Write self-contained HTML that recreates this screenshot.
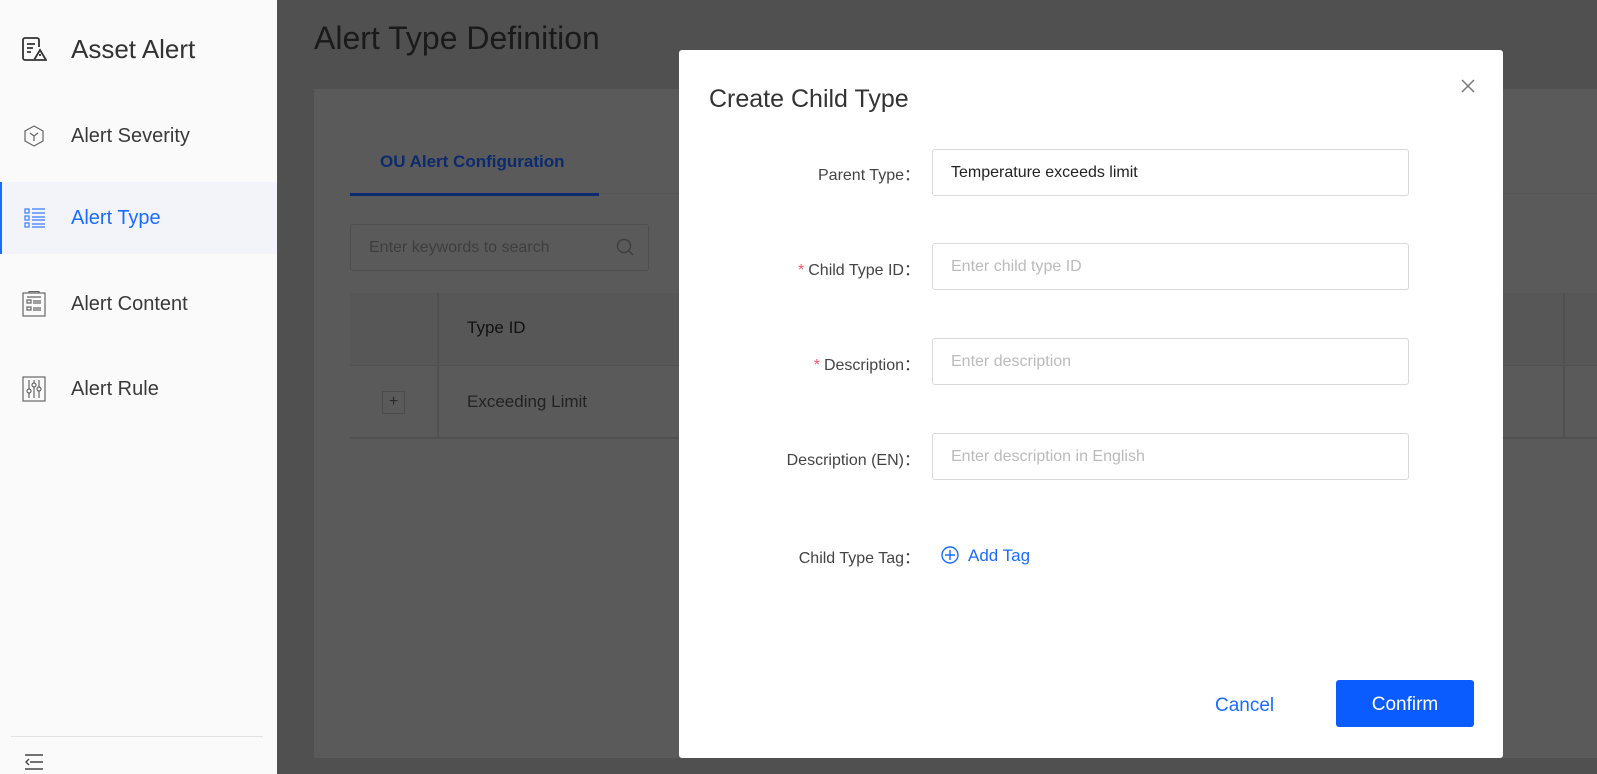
<!DOCTYPE html>
<html><head><meta charset="utf-8"><style>
*{box-sizing:border-box;margin:0;padding:0}
body{width:1597px;height:774px;overflow:hidden;position:relative;font-family:"Liberation Sans",sans-serif;background:#505050}
.sb{position:absolute;left:0;top:0;width:277px;height:774px;background:#fafafa}
.sb .it{position:absolute;left:0;width:277px;height:72px;display:flex;align-items:center;font-size:20px;color:#3a3a3a}
.sb .it span{position:absolute;left:71px}
.sb .it svg{position:absolute;left:22px}
.abs{position:absolute}
.lbl{position:absolute;right:677px;font-size:16px;color:#444;text-align:right;white-space:nowrap}
.inp{position:absolute;left:932px;width:477px;height:47px;border:1.5px solid #d9d9d9;border-radius:3px;font-size:16px;color:#bbb;padding-left:18px;line-height:46px}
.req{color:#f5576c;margin-right:4px}
</style></head><body>
<div class="sb">
 <div class="it" style="top:13px;font-size:26px;color:#333">
  <svg style="left:21px" width="26" height="26" viewBox="0 0 26 26" fill="none" stroke="#333" stroke-width="1.8"><path d="M18 11V4a2 2 0 0 0-2-2H4a2 2 0 0 0-2 2v18a2 2 0 0 0 2 2h8"/><path d="M6 8h8M6 12h6M6 16h4"/><path d="M19 14l6 10h-12z"/><path d="M19 18v2"/></svg>
  <span>Asset Alert</span></div>
 <div class="it" style="top:100px"><svg width="24" height="24" viewBox="0 0 24 24" fill="none" stroke="#666" stroke-width="1.2"><path d="M12 2l9 5v10l-9 5-9-5V7z"/><path d="M8 9l4 3 4-3M12 12v5"/></svg><span>Alert Severity</span></div>
 <div class="it" style="top:182px;background:#f2f4f9;color:#1a6cff;border-left:2px solid #1a6cff"><svg style="left:21px" width="24" height="24" viewBox="0 0 24 24" fill="none" stroke="#3a7bff" stroke-width="1.2"><rect x="2" y="3" width="4" height="4"/><rect x="2" y="10" width="4" height="4"/><rect x="2" y="17" width="4" height="4"/><path d="M9 3h13M9 7h13M9 11h13M9 14h13M9 18h13M9 21h13"/></svg><span style="left:69px">Alert Type</span></div>
 <div class="it" style="top:268px"><svg width="24" height="26" viewBox="0 0 24 26" fill="none" stroke="#666" stroke-width="1.2"><rect x="1" y="2" width="22" height="23"/><path d="M7 2V0.5h10V2M5 9h4v3H5zM5 16h4v3H5zM11 10h8M11 12h8M11 17h8M11 19h8M5 6h14"/></svg><span>Alert Content</span></div>
 <div class="it" style="top:353px"><svg width="24" height="26" viewBox="0 0 24 26" fill="none" stroke="#666" stroke-width="1.2"><rect x="1" y="1" width="22" height="24"/><path d="M7 4v18M12 4v18M17 4v18"/><circle cx="7" cy="15" r="2" fill="#fafafa"/><circle cx="12" cy="9" r="2" fill="#fafafa"/><circle cx="17" cy="13" r="2" fill="#fafafa"/></svg><span>Alert Rule</span></div>
 <div class="abs" style="left:11px;top:736px;width:252px;height:1px;background:#e3e3e3"></div>
 <svg class="abs" style="left:23px;top:754px" width="22" height="16" viewBox="0 0 22 16" fill="none" stroke="#444" stroke-width="1.4"><path d="M2 1h18M7 8h13M2 15h18M6 5l-3 3 3 3"/></svg>
</div>
<div class="abs" style="left:314px;top:20px;font-size:32px;color:#1a1a1a">Alert Type Definition</div>
<div class="abs" style="left:314px;top:89px;width:1300px;height:669px;background:#5a5a5a">
 <div class="abs" style="left:66px;top:63px;font-size:17px;font-weight:bold;color:#0c2a6e">OU Alert Configuration</div>
 <div class="abs" style="left:36px;top:104px;width:1300px;height:1px;background:#555"></div>
 <div class="abs" style="left:36px;top:104px;width:249px;height:3px;background:#0c2a6e"></div>
 <div class="abs" style="left:36px;top:135px;width:299px;height:47px;border:1.5px solid #4e4e4e;border-radius:3px;font-size:16px;color:#3e3e3e;padding-left:18px;line-height:46px">Enter keywords to search
  <svg class="abs" style="right:14px;top:13px" width="18" height="18" viewBox="0 0 18 18" fill="none" stroke="#3e3e3e" stroke-width="1.4"><circle cx="8" cy="8" r="6.5"/><path d="M13 13l4 4"/></svg></div>
 <div class="abs" style="left:36px;top:204px;width:1300px;height:72px;background:#575757"></div>
 <div class="abs" style="left:36px;top:276px;width:1300px;height:1px;background:#505050"></div>
 <div class="abs" style="left:36px;top:348px;width:1300px;height:2px;background:#505050"></div>
 <div class="abs" style="left:123px;top:204px;width:2px;height:145px;background:#505050"></div>
 <div class="abs" style="left:1249px;top:204px;width:2px;height:145px;background:#505050"></div>
 <div class="abs" style="left:153px;top:229px;font-size:17px;color:#111">Type ID</div>
 <div class="abs" style="left:153px;top:303px;font-size:17px;color:#222">Exceeding Limit</div>
 <div class="abs" style="left:68px;top:302px;width:23px;height:23px;border:1.5px solid #4c4c4c;color:#2a2a2a;font-size:16px;text-align:center;line-height:19px">+</div>
</div>
<div class="abs" style="left:679px;top:50px;width:824px;height:708px;background:#fff;border-radius:3px">
 <div class="abs" style="left:30px;top:35px;font-size:25px;color:#333">Create Child Type</div>
 <svg class="abs" style="left:782px;top:29px" width="14" height="14" viewBox="0 0 14 14" stroke="#777" stroke-width="1.5"><path d="M1 1l12 12M13 1L1 13"/></svg>
</div>
<div class="lbl" style="top:161px">Parent Type：</div>
<div class="inp" style="top:149px;color:#222">Temperature exceeds limit</div>
<div class="lbl" style="top:256px"><span class="req">*</span>Child Type ID：</div>
<div class="inp" style="top:243px">Enter child type ID</div>
<div class="lbl" style="top:351px"><span class="req">*</span>Description：</div>
<div class="inp" style="top:338px">Enter description</div>
<div class="lbl" style="top:446px">Description (EN)：</div>
<div class="inp" style="top:433px">Enter description in English</div>
<div class="lbl" style="top:544px">Child Type Tag：</div>
<svg class="abs" style="left:941px;top:546px" width="18" height="18" viewBox="0 0 18 18" fill="none" stroke="#1a6cff" stroke-width="1.4"><circle cx="9" cy="9" r="8"/><path d="M9 4v10M4 9h10"/></svg>
<div class="abs" style="left:968px;top:546px;font-size:17px;color:#1a6cff">Add Tag</div>
<div class="abs" style="left:1215px;top:695px;font-size:19px;color:#1a6cff">Cancel</div>
<div class="abs" style="left:1336px;top:680px;width:138px;height:47px;background:#0a5cff;border-radius:3px;color:#fff;font-size:19px;text-align:center;line-height:49px">Confirm</div>
</body></html>
